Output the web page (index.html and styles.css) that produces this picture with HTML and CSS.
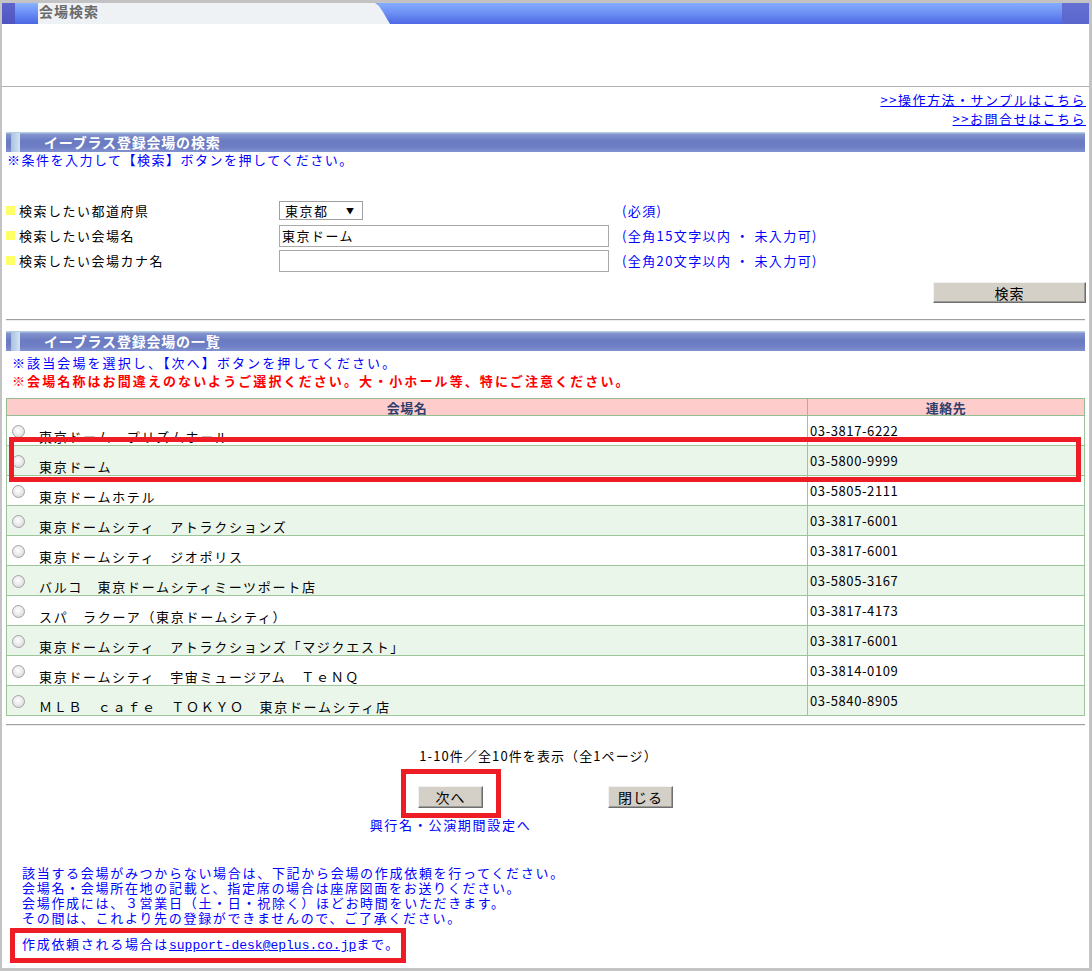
FILE: index.html
```html
<!DOCTYPE html>
<html lang="ja">
<head>
<meta charset="utf-8">
<title>会場検索</title>
<link rel="stylesheet" href="styles.css">
</head>
<body>
<div class="frame">
  <div class="titlebar">
    <div class="tb-edge-l"></div>
    <div class="tb-light"></div>
    <div class="tb-tab"><span class="tb-title">会場検索</span></div>
    <div class="tb-band"></div>
    <div class="tb-edge-r"></div>
  </div>
  <div class="top-space"></div>
  <div class="rule-full"></div>
  <div class="links">
    <a href="#">&gt;&gt;操作方法・サンプルはこちら</a>
    <a href="#">&gt;&gt;お問合せはこちら</a>
  </div>

  <div class="content">
    <div class="secbar"><span class="secbar-mark"></span><span class="secbar-title">イーブラス登録会場の検索</span></div>
    <p class="note-blue">※条件を入力して【検索】ボタンを押してください。</p>

    <div class="form">
      <div class="frow">
        <div class="flabel"><span class="sq"></span>検索したい都道府県</div>
        <div class="ffield"><span class="select">東京都<span class="arrow">▼</span></span></div>
        <div class="fhint">(必須)</div>
      </div>
      <div class="frow">
        <div class="flabel"><span class="sq"></span>検索したい会場名</div>
        <div class="ffield"><input class="tinput" type="text" value="東京ドーム"></div>
        <div class="fhint">(全角15文字以内 ・ 未入力可)</div>
      </div>
      <div class="frow">
        <div class="flabel"><span class="sq"></span>検索したい会場カナ名</div>
        <div class="ffield"><input class="tinput" type="text" value=""></div>
        <div class="fhint">(全角20文字以内 ・ 未入力可)</div>
      </div>
    </div>
    <div class="search-row"><button class="btn btn-search" type="button">検索</button></div>

    <div class="rule"></div>

    <div class="secbar secbar-2"><span class="secbar-mark"></span><span class="secbar-title">イーブラス登録会場の一覧</span></div>
    <div class="notes">
      <p class="note-blue">※該当会場を選択し、【次へ】ボタンを押してください。</p>
      <p class="note-red">※会場名称はお間違えのないようご選択ください。大・小ホール等、特にご注意ください。</p>
    </div>

    <table class="venues">
      <thead>
        <tr><th class="col-name">会場名</th><th class="col-tel">連絡先</th></tr>
      </thead>
      <tbody>
        <tr><td class="name"><div class="cell"><span class="radio"></span><span class="vname">東京ドーム　プリズムホール</span></div></td><td class="tel">03-3817-6222</td></tr>
        <tr class="alt"><td class="name"><div class="cell"><span class="radio"></span><span class="vname">東京ドーム</span></div></td><td class="tel">03-5800-9999</td></tr>
        <tr><td class="name"><div class="cell"><span class="radio"></span><span class="vname">東京ドームホテル</span></div></td><td class="tel">03-5805-2111</td></tr>
        <tr class="alt"><td class="name"><div class="cell"><span class="radio"></span><span class="vname">東京ドームシティ　アトラクションズ</span></div></td><td class="tel">03-3817-6001</td></tr>
        <tr><td class="name"><div class="cell"><span class="radio"></span><span class="vname">東京ドームシティ　ジオポリス</span></div></td><td class="tel">03-3817-6001</td></tr>
        <tr class="alt"><td class="name"><div class="cell"><span class="radio"></span><span class="vname">バルコ　東京ドームシティミーツポート店</span></div></td><td class="tel">03-5805-3167</td></tr>
        <tr><td class="name"><div class="cell"><span class="radio"></span><span class="vname">スパ　ラクーア（東京ドームシティ）</span></div></td><td class="tel">03-3817-4173</td></tr>
        <tr class="alt"><td class="name"><div class="cell"><span class="radio"></span><span class="vname">東京ドームシティ　アトラクションズ「マジクエスト」</span></div></td><td class="tel">03-3817-6001</td></tr>
        <tr><td class="name"><div class="cell"><span class="radio"></span><span class="vname">東京ドームシティ　宇宙ミュージアム　ＴｅＮＱ</span></div></td><td class="tel">03-3814-0109</td></tr>
        <tr class="alt"><td class="name"><div class="cell"><span class="radio"></span><span class="vname">ＭＬＢ　ｃａｆｅ　ＴＯＫＹＯ　東京ドームシティ店</span></div></td><td class="tel">03-5840-8905</td></tr>
      </tbody>
    </table>

    <div class="rule rule-3"></div>

    <p class="pager">1-10件／全10件を表示（全1ページ）</p>

    <div class="actions">
      <div class="act-col">
        <button class="btn btn-small" type="button">次へ</button>
        <a class="act-link" href="#">興行名・公演期間設定へ</a>
      </div>
      <div class="act-col">
        <button class="btn btn-small" type="button">閉じる</button>
      </div>
    </div>

    <div class="footer-note">
      <p>該当する会場がみつからない場合は、下記から会場の作成依頼を行ってください。</p>
      <p>会場名・会場所在地の記載と、指定席の場合は座席図面をお送りください。</p>
      <p>会場作成には、３営業日（土・日・祝除く）ほどお時間をいただきます。</p>
      <p>その間は、これより先の登録ができませんので、ご了承ください。</p>
      <p class="mail-line">作成依頼される場合は<a class="mail" href="#">support-desk@eplus.co.jp</a>まで。</p>
    </div>
  </div>

  <div class="mark mark-row"></div>
  <div class="mark mark-next"></div>
  <div class="mark mark-mail"></div>
</div>
</body>
</html>
```

FILE: styles.css
```css
* { box-sizing: border-box; }
html, body { margin: 0; padding: 0; background: #fff; }
body {
  font-family: "Noto Sans CJK JP", "Noto Sans", sans-serif;
  font-size: 13px;
  color: #000;
  letter-spacing: 1.5px;
}
p { margin: 0; }

.frame {
  position: relative;
  width: 1092px;
  height: 971px;
  border-style: solid;
  border-color: #c3c3c3;
  border-width: 3px 3px 3px 2px;
  background: #fff;
  overflow: hidden;
}

/* title bar */
.titlebar {
  display: flex;
  height: 21px;
  background: linear-gradient(#86acfc, #6e92f5 45%, #4d68e3);
}
.tb-edge-l { width: 13px; background: linear-gradient(#6064cc, #4e54c2); }
.tb-light { width: 23px; background: linear-gradient(#8cb2ff, #6488f4 55%, #4c66e2); }
.tb-tab {
  width: 352px;
  background: #eef2f4;
  clip-path: polygon(0 0, 337px 0, 341px 3px, 345px 9px, 349px 16px, 352px 100%, 0 100%);
}
.tb-title {
  display: block;
  font-size: 14px;
  font-weight: bold;
  color: #6a6a6a;
  line-height: 16px;
  padding-left: 1px;
  letter-spacing: 1px;
}
.tb-band { flex: 1; }
.tb-edge-r { width: 27px; background: linear-gradient(#6470d2, #5a66cc); }

.top-space { height: 62px; }
.rule-full { height: 1px; background: #b0b0b0; }

.links {
  display: flex;
  flex-direction: column;
  align-items: flex-end;
  padding: 3px 3px 0 0;
  line-height: 19px;
}
.links a, .act-link, .mail { color: #0000ff; text-decoration: underline; }
.act-link { text-decoration: none; }

.content { padding: 0 4px; }

/* section bars */
.secbar {
  display: flex;
  align-items: center;
  height: 20px;
  margin-top: 4px;
  background: linear-gradient(#b4cde0 0, #b4cde0 1px, #8494cf 2px, #6b7bc1 45%, #6e7ec4 75%, #8292d0 100%);
}
.secbar-2 { margin-top: 10px; }
.secbar-mark {
  width: 9px;
  height: 19px;
  margin-left: 5px;
  background: linear-gradient(to right, #a8c2de, #d4e4f4);
}
.secbar-title {
  margin-left: 24px;
  color: #fff;
  font-weight: bold;
  font-size: 14px;
  letter-spacing: 0.8px;
  line-height: 16px;
}

.note-blue { color: #0000ff; line-height: 16px; padding-left: 1px; }
.note-red { color: #ff0000; font-weight: bold; line-height: 18px; letter-spacing: 2.1px; }

/* form */
.form { margin-top: 30px; }
.frow {
  display: grid;
  grid-template-columns: 273px 343px 1fr;
  align-items: center;
  height: 25px;
}
.flabel { display: flex; align-items: center; }
.sq { width: 9px; height: 9px; background: #ffff66; margin-right: 4px; }
.select {
  display: inline-flex;
  align-items: center;
  justify-content: space-between;
  width: 84px;
  height: 19px;
  border: 1px solid #a0a0a0;
  padding: 0 8px 0 5px;
  font-size: 13px;
  line-height: 17px;
}
.arrow { font-size: 8px; letter-spacing: 0; }
.tinput {
  display: block;
  width: 330px;
  height: 22px;
  border: 1px solid #a9a9a9;
  padding: 0 2px;
  margin: 0;
  font-family: "Noto Sans CJK JP", sans-serif;
  font-size: 13px;
  letter-spacing: 1.5px;
  color: #000;
  background: #fff;
  outline: none;
}
.fhint { color: #0000ff; letter-spacing: 1.4px; }

.btn {
  font-family: "Noto Sans CJK JP", sans-serif;
  font-size: 14px;
  color: #000;
  background: #d4d0c8;
  border: 1px solid;
  border-color: #f2f2f2 #6e6e6e #6e6e6e #f2f2f2;
  box-shadow: inset -1px -1px 0 #9c9a94;
  padding: 0;
  margin: 0;
  line-height: 18px;
  letter-spacing: 1px;
}
.search-row { display: flex; justify-content: flex-end; margin-top: 9px; margin-right: -1px; }
.btn-search { width: 153px; height: 21px; }

.rule { height: 2px; margin-top: 16px; border-top: 1px solid #a0a0a0; border-bottom: 1px solid #ececec; }
.rule-3 { margin-top: 8px; }

.notes { padding: 3px 0 0 6px; }
.notes .note-blue { line-height: 18px; padding-left: 0; letter-spacing: 2.1px; }

/* table */
.venues {
  width: 100%;
  margin-top: 8px;
  border-collapse: collapse;
  border: 1px solid #92be92;
}
.venues th {
  height: 17px;
  padding: 0;
  background: #ffcccc;
  border: 1px solid #92be92;
  color: #2e3f6e;
  font-weight: bold;
  font-size: 13px;
  line-height: 15px;
  letter-spacing: 0.5px;
}
.col-name { width: 801px; }
.venues td {
  height: 30px;
  padding: 0;
  border: 1px solid #9cc59c;
}
.venues tr.alt td { background: #ebf6eb; }
.venues td.name { vertical-align: top; padding-left: 5px; }
.cell { display: flex; align-items: flex-start; height: 29px; }
.radio {
  flex: none;
  width: 13px;
  height: 13px;
  margin-top: 9px;
  margin-right: 14px;
  border-radius: 50%;
  border: 1px solid #a4a4a4;
  background: radial-gradient(circle at 45% 40%, #ffffff 0, #ececec 45%, #cfcfcf 100%);
}
.vname { margin-top: 13px; line-height: 16px; white-space: nowrap; letter-spacing: 1.7px; }
.venues td.tel {
  vertical-align: middle;
  padding-left: 2px;
  letter-spacing: 0.6px;
  line-height: 16px;
}

.pager { text-align: center; margin-top: 22px; line-height: 16px; padding-right: 14px; letter-spacing: 1.1px; }

.actions {
  display: grid;
  grid-template-columns: 190px 190px;
  justify-content: center;
  margin-top: 22px;
}
.act-col { display: flex; flex-direction: column; align-items: center; }
.btn-small { width: 65px; height: 22px; }
.act-link { margin-top: 9px; line-height: 16px; letter-spacing: 1.7px; }

.footer-note {
  margin-top: 33px;
  padding-left: 16px;
  color: #0000ff;
  font-family: "Liberation Sans", "Noto Sans CJK JP", sans-serif;
  line-height: 15px;
  letter-spacing: 1.7px;
}
.mail-line { margin-top: 11px; line-height: 16px; }
.mail { font-family: "Liberation Mono", monospace; letter-spacing: 0; font-size: 13px; }

/* red annotation boxes */
.mark { position: absolute; border: 5px solid #ee1c24; }
.mark-row { left: 7px; top: 434px; width: 1072px; height: 45px; }
.mark-next { left: 399px; top: 766px; width: 100px; height: 49px; }
.mark-mail { left: 8px; top: 925px; width: 396px; height: 35px; }
```
